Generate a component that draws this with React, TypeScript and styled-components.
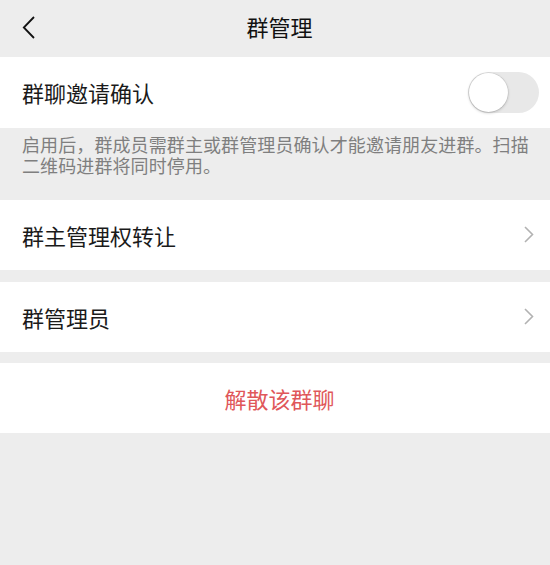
import React from "react";
import styled, { createGlobalStyle } from "styled-components";

const Global = createGlobalStyle`
  html, body { margin: 0; padding: 0; background: #ededed; }
  body { font-family: "Noto Sans CJK SC", "Noto Sans", sans-serif; }
  * { box-sizing: border-box; }
`;

const Page = styled.div`
  width: 550px;
  min-height: 565px;
  background: #ededed;
  display: flex;
  flex-direction: column;
`;

const NavBar = styled.div`
  height: 57px;
  display: grid;
  grid-template-columns: 60px 1fr 60px;
  align-items: center;
  padding: 0 0 6px 9px;
  background: #ededed;
`;

const BackButton = styled.div`
  display: flex;
  align-items: center;
  margin-left: -9px;
  padding: 3px 0 0 22px;
  height: 100%;
`;

const Title = styled.div`
  text-align: center;
  font-size: 22px;
  color: #111;
  font-weight: 400;
`;

const Cell = styled.div<{ $gapTop?: number; $h?: number }>`
  height: ${(p) => p.$h ?? 70}px;
  background: #fff;
  display: flex;
  align-items: center;
  padding: 0 11px 1px 22px;
  margin-top: ${(p) => p.$gapTop ?? 0}px;
`;

const Label = styled.div`
  flex: 1;
  font-size: 22px;
  color: #1a1a1a;
`;

const Hint = styled.div`
  padding: 6px 16px 0 22px;
  height: 72px;
  font-size: 18px;
  line-height: 21px;
  letter-spacing: 0.1px;
  color: #7f7f7f;
`;

const Track = styled.div<{ $on?: boolean }>`
  width: 71px;
  height: 41px;
  border-radius: 21px;
  background: ${(p) => (p.$on ? "#07c160" : "#e8e8e8")};
  position: relative;
`;

const Knob = styled.div`
  position: absolute;
  top: 1px;
  left: 1px;
  width: 39px;
  height: 39px;
  border-radius: 50%;
  background: #fff;
  box-shadow: 0 1px 3px rgba(0, 0, 0, 0.22), 0 0 0 0.5px rgba(0, 0, 0, 0.1);
`;

const Chevron = styled.svg`
  width: 10px;
  height: 17px;
  margin-right: 5px;
`;

const DangerCell = styled(Cell)`
  justify-content: center;
  padding: 0 0 1px 9px;
  font-size: 22px;
  color: #e0575a;
`;

const Arrow = () => (
  <Chevron viewBox="0 0 10 17">
    <path d="M1 1 L8.5 8.5 L1 16" fill="none" stroke="#b2b2b2" strokeWidth="1.6" />
  </Chevron>
);

export default function App() {
  return (
    <Page>
      <Global />
      <NavBar>
        <BackButton>
          <svg width="13" height="23" viewBox="0 0 13 23">
            <path d="M12 1 L1.8 11.5 L12 22" fill="none" stroke="#111" strokeWidth="1.8" />
          </svg>
        </BackButton>
        <Title>群管理</Title>
        <div />
      </NavBar>
      <Cell $h={71}>
        <Label>群聊邀请确认</Label>
        <Track>
          <Knob />
        </Track>
      </Cell>
      <Hint>启用后，群成员需群主或群管理员确认才能邀请朋友进群。扫描二维码进群将同时停用。</Hint>
      <Cell>
        <Label>群主管理权转让</Label>
        <Arrow />
      </Cell>
      <Cell $gapTop={12}>
        <Label>群管理员</Label>
        <Arrow />
      </Cell>
      <DangerCell $gapTop={11}>解散该群聊</DangerCell>
    </Page>
  );
}
